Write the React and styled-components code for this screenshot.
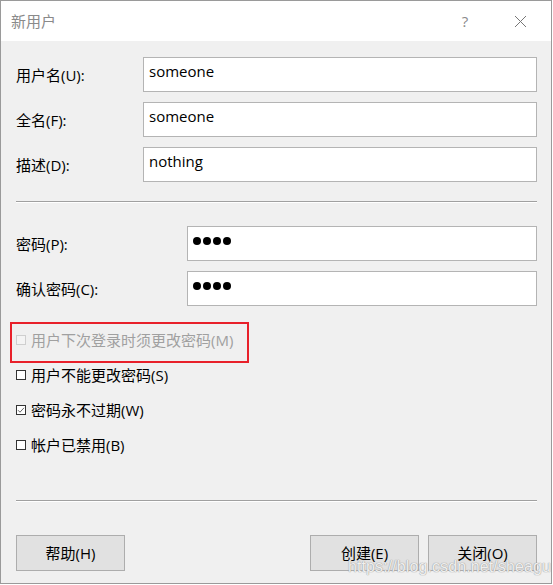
import React from "react";
import styled, { createGlobalStyle } from "styled-components";

const GlobalStyle = createGlobalStyle`
  html, body {
    margin: 0;
    padding: 0;
    background: #ffffff;
  }
  * {
    box-sizing: border-box;
  }
`;

const font = `"Segoe UI", "Open Sans", "Noto Sans CJK SC", sans-serif`;

const Window = styled.div`
  position: relative;
  width: 552px;
  height: 584px;
  border: 1px solid #9a9a9a;
  background: #f0f0f0;
  display: flex;
  flex-direction: column;
  font-family: ${font};
  font-size: 15px;
  color: #000;
  overflow: hidden;
`;

const TitleBar = styled.div`
  height: 40px;
  flex: none;
  background: #ffffff;
  display: flex;
  align-items: center;
  padding-left: 10px;
`;

const Title = styled.div`
  flex: 1;
  color: #8a8a8a;
  font-size: 15px;
  line-height: 20px;
`;

const TitleButton = styled.div`
  width: ${(p) => p.$w}px;
  height: 40px;
  display: flex;
  align-items: center;
  justify-content: center;
  color: #8a8a8a;
  font-size: 15px;
`;

const Body = styled.div`
  flex: 1;
  display: flex;
  flex-direction: column;
  padding: 16px 14px 0 15px;
`;

const FieldGroup = styled.div`
  display: flex;
  flex-direction: column;
  gap: 10px;
`;

const FieldRow = styled.div`
  display: grid;
  grid-template-columns: ${(p) => p.$labelWidth}px 1fr;
  align-items: center;
`;

const Label = styled.label`
  line-height: 20px;
`;

const Input = styled.div`
  height: 35px;
  background: #ffffff;
  border: 1px solid #b4b4b4;
  padding: 1px 0 0 5px;
  line-height: 24px;
  font-size: 15px;
`;

const Dots = styled.div`
  display: flex;
  gap: 2px;
  padding: 9px 0 0 0;
`;

const Dot = styled.span`
  width: 8px;
  height: 8px;
  border-radius: 50%;
  background: #000;
`;

const Separator = styled.div`
  height: 2px;
  border-top: 1px solid #a0a0a0;
  border-bottom: 1px solid #ffffff;
  margin: ${(p) => p.$margin};
`;

const CheckList = styled.div`
  display: flex;
  flex-direction: column;
  margin-top: 16px;
`;

const CheckRow = styled.div`
  position: relative;
  height: 35px;
  display: flex;
  align-items: center;
  gap: 5px;
  color: ${(p) => (p.$disabled ? "#a0a0a0" : "#000")};
  line-height: 20px;

  &::after {
    content: "";
    display: ${(p) => (p.$marked ? "block" : "none")};
    position: absolute;
    left: -6px;
    top: 0;
    width: 235px;
    height: 37px;
    border: 2px solid #e8202a;
  }
`;

const Box = styled.span`
  width: 10px;
  height: 10px;
  flex: none;
  border: 1px solid ${(p) => (p.$disabled ? "#cfcfcf" : "#333")};
  background: ${(p) => (p.$disabled ? "#f4f4f4" : "#fff")};
  display: flex;
  align-items: center;
  justify-content: center;
  margin-top: 1px;
`;

const Footer = styled.div`
  display: flex;
  align-items: center;
  gap: 9px;
`;

const Spacer = styled.div`
  flex: 1;
`;

const Button = styled.div`
  width: 109px;
  height: 36px;
  background: #e1e1e1;
  border: 1px solid #adadad;
  display: flex;
  align-items: center;
  justify-content: center;
  line-height: 20px;
`;

const Watermark = styled.div`
  position: absolute;
  left: 347px;
  top: 557px;
  font-family: "Liberation Sans", Arial, sans-serif;
  font-size: 16px;
  color: rgba(255, 255, 255, 0.85);
  text-shadow: 0 0 1px #9a9a9a, 0 0 1px #9a9a9a;
  letter-spacing: 0.1px;
  pointer-events: none;
`;

const Check = () => (
  <svg width="8" height="8" viewBox="0 0 8 8">
    <path d="M1 4.2 L3 6.2 L7 1.8" fill="none" stroke="#666" strokeWidth="1" />
  </svg>
);

const Close = () => (
  <svg width="13" height="13" viewBox="0 0 13 13">
    <path d="M1 1 L12 12 M12 1 L1 12" stroke="#777" strokeWidth="1" />
  </svg>
);

const Password = () => (
  <Input>
    <Dots>
      <Dot />
      <Dot />
      <Dot />
      <Dot />
    </Dots>
  </Input>
);

const checks = [
  { text: "用户下次登录时须更改密码(M)", disabled: true, marked: true },
  { text: "用户不能更改密码(S)" },
  { text: "密码永不过期(W)", checked: true },
  { text: "帐户已禁用(B)" },
];

export default function App() {
  return (
    <>
      <GlobalStyle />
      <Window>
        <TitleBar>
          <Title>新用户</Title>
          <TitleButton $w={48}>?</TitleButton>
          <TitleButton $w={62}>
            <Close />
          </TitleButton>
        </TitleBar>
        <Body>
          <FieldGroup>
            <FieldRow $labelWidth={127}>
              <Label>用户名(U):</Label>
              <Input>someone</Input>
            </FieldRow>
            <FieldRow $labelWidth={127}>
              <Label>全名(F):</Label>
              <Input>someone</Input>
            </FieldRow>
            <FieldRow $labelWidth={127}>
              <Label>描述(D):</Label>
              <Input>nothing</Input>
            </FieldRow>
          </FieldGroup>
          <Separator $margin="19px 0 23px 0" />
          <FieldGroup>
            <FieldRow $labelWidth={171}>
              <Label>密码(P):</Label>
              <Password />
            </FieldRow>
            <FieldRow $labelWidth={171}>
              <Label>确认密码(C):</Label>
              <Password />
            </FieldRow>
          </FieldGroup>
          <CheckList>
            {checks.map((c) => (
              <CheckRow key={c.text} $disabled={c.disabled} $marked={c.marked}>
                <Box $disabled={c.disabled}>{c.checked && <Check />}</Box>
                {c.text}
              </CheckRow>
            ))}
          </CheckList>
          <Separator $margin="38px 0 33px 0" />
          <Footer>
            <Button>帮助(H)</Button>
            <Spacer />
            <Button>创建(E)</Button>
            <Button>关闭(O)</Button>
          </Footer>
        </Body>
        <Watermark>https://blog.csdn.net/sheagu</Watermark>
      </Window>
    </>
  );
}
